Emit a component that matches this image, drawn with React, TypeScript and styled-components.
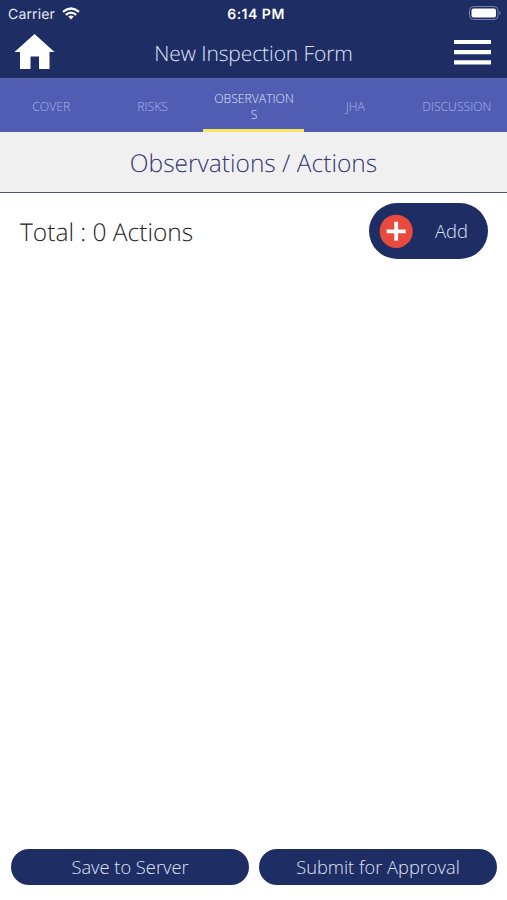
import React from "react";
import styled, { createGlobalStyle } from "styled-components";

const NAVY = "#1f2d65";

const GlobalStyle = createGlobalStyle`
  * { box-sizing: border-box; }
  body { margin: 0; background: #fff; }
  button { border: 0; padding: 0; background: none; font: inherit; color: inherit; }
`;

const Screen = styled.div`
  display: flex;
  flex-direction: column;
  width: 100%;
  height: 900px;
  overflow: hidden;
  background: #fff;
  font-family: "Open Sans", sans-serif;
  font-weight: 300;
  text-rendering: geometricPrecision;
`;

const Header = styled.header`
  height: 78px;
  background: ${NAVY};
  color: #fff;
`;

const StatusBar = styled.div`
  display: grid;
  grid-template-columns: 1fr auto 1fr;
  align-items: center;
  height: 27px;
  padding: 0 5px 0 8px;
  font: 400 14px/27px Inter, sans-serif;
`;

const Carrier = styled.div`
  display: flex;
  align-items: center;
  gap: 7px;
  padding-top: 1px;
  line-height: 26px;
  color: #e6e9f5;
  letter-spacing: 0.15px;

  svg {
    margin-top: -2px;
  }
`;

const Clock = styled.div`
  padding: 1px 0 0 2px;
  font-size: 14px;
  font-weight: 600;
  line-height: 27px;
  letter-spacing: 0.5px;
`;

const Battery = styled.div`
  display: flex;
  justify-content: flex-end;
  padding-bottom: 1px;
`;

const NavBar = styled.div`
  display: grid;
  grid-template-columns: 1fr auto 1fr;
  align-items: center;
  height: 51px;
  padding: 0 16px 0 14px;
`;

const NavTitle = styled.h1`
  margin: 0;
  padding: 3px 0 0 2px;
  font-size: 21px;
  font-weight: 300;
  line-height: 48px;
  letter-spacing: -0.1px;
  color: #dfe4f5;
  white-space: nowrap;
`;

const IconButton = styled.button<{ $end?: boolean }>`
  display: flex;
  padding-bottom: 2px;
  justify-self: ${(p) => (p.$end ? "end" : "start")};
`;

const Tabs = styled.nav`
  display: grid;
  grid-template-columns: repeat(5, 1fr);
  height: 54px;
  background: #505db3;
  border-top: 1px solid #5665a0;
`;

const Tab = styled.button<{ $active?: boolean }>`
  display: flex;
  align-items: center;
  justify-content: center;
  padding: ${(p) => (p.$active ? "5px 8px 0 9px" : "5px 0 0 1px")};
  border-bottom: 3px solid ${(p) => (p.$active ? "#fbe75c" : "transparent")};
  font-size: 12.2px;
  line-height: 16px;
  text-align: center;
  word-break: ${(p) => (p.$active ? "break-all" : "normal")};
  color: ${(p) => (p.$active ? "#dfe2fa" : "#aab4ec")};
`;

const SectionTitle = styled.h2`
  height: 61px;
  margin: 0;
  background: #f0f0f0;
  border-bottom: 1px solid #48557f;
  font-size: 24.5px;
  font-weight: 300;
  line-height: 63px;
  text-align: center;
  color: #303773;
`;

const Summary = styled.section`
  display: flex;
  flex: 1;
  align-items: flex-start;
  justify-content: space-between;
  padding: 10px 19px 0 20px;
`;

const Total = styled.div`
  font-size: 24.5px;
  line-height: 59px;
  color: #222;
`;

const AddButton = styled.button`
  display: flex;
  align-items: center;
  width: 119px;
  height: 56px;
  padding-left: 10px;
  gap: 22px;
  border-radius: 28px;
  background: ${NAVY};
  color: #dfe4f5;
  font-size: 18.4px;
  line-height: 24px;
`;

const Footer = styled.footer`
  display: grid;
  grid-template-columns: 1fr 1fr;
  gap: 10px;
  padding: 0 10px 15px 11px;
`;

const ActionButton = styled.button`
  height: 36px;
  border-radius: 18px;
  background: ${NAVY};
  color: #dfe4f5;
  font-size: 18.3px;
  line-height: 36px;
`;

const WifiIcon = () => (
  <svg width="18" height="13" viewBox="0 0 18 13" fill="none" stroke="#fff" strokeWidth="2.3">
    <path d="M1 4.8Q9-1.8 17 4.8" />
    <path d="M3.8 7.8Q9 3.4 14.2 7.8" />
    <path d="M6.2 9.6Q9 7.4 11.8 9.6L9 12.4Z" fill="#fff" stroke="none" />
  </svg>
);

const BatteryIcon = () => (
  <svg width="33" height="15" viewBox="0 0 33 15">
    <rect x=".5" y=".5" width="28.5" height="13" rx="4" fill="none" stroke="#7882ab" />
    <rect x="2.5" y="2.5" width="24.5" height="9" rx="2" fill="#fff" />
    <path d="M30.5 5Q33 7 30.5 9Z" fill="#7882ab" />
  </svg>
);

const HomeIcon = () => (
  <svg width="41" height="36" viewBox="0 0 41 36">
    <path
      d="M20.5 0L40.5 18H35.5V35H25V22.5H16.5V35H6V18H.5Z"
      fill="#fff"
    />
  </svg>
);

const MenuIcon = () => (
  <svg width="38" height="26" viewBox="0 0 38 26">
    <path d="M1 3H38M1 13.2H38M1 23.4H38" stroke="#fff" strokeWidth="4.2" />
  </svg>
);

const PlusIcon = () => (
  <svg width="34" height="34" viewBox="0 0 34 34">
    <circle cx="17.2" cy="17.3" r="16.6" fill="#e84a3d" />
    <path d="M7.7 17.3H26.7M17.2 7.8V26.8" stroke="#fff" strokeWidth="3.8" />
  </svg>
);

const tabs = ["COVER", "RISKS", "OBSERVATIONS", "JHA", "DISCUSSION"];

export default function App() {
  return (
    <Screen>
      <GlobalStyle />
      <Header>
        <StatusBar>
          <Carrier>
            Carrier
            <WifiIcon />
          </Carrier>
          <Clock>6:14 PM</Clock>
          <Battery>
            <BatteryIcon />
          </Battery>
        </StatusBar>
        <NavBar>
          <IconButton aria-label="Home">
            <HomeIcon />
          </IconButton>
          <NavTitle>New Inspection Form</NavTitle>
          <IconButton $end aria-label="Menu">
            <MenuIcon />
          </IconButton>
        </NavBar>
      </Header>
      <Tabs>
        {tabs.map((label) => (
          <Tab key={label} $active={label === "OBSERVATIONS"}>
            {label}
          </Tab>
        ))}
      </Tabs>
      <SectionTitle>Observations / Actions</SectionTitle>
      <Summary>
        <Total>Total : 0 Actions</Total>
        <AddButton>
          <PlusIcon />
          Add
        </AddButton>
      </Summary>
      <Footer>
        <ActionButton>Save to Server</ActionButton>
        <ActionButton>Submit for Approval</ActionButton>
      </Footer>
    </Screen>
  );
}
